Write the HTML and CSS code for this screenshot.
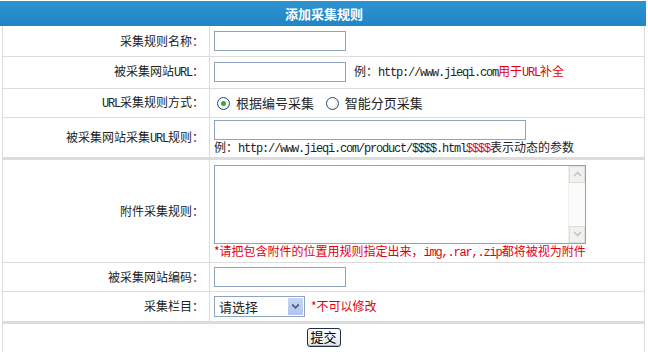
FILE: index.html
```html
<!DOCTYPE html>
<html lang="zh">
<head>
<meta charset="utf-8">
<title>添加采集规则</title>
<link rel="stylesheet" href="styles.css">
</head>
<body>
<div class="wrap">
  <div class="head">添加采集规则</div>
  <table class="grid">
    <tr class="r1">
      <td class="lab">采集规则名称：</td>
      <td class="val"><span class="inp w130"></span></td>
    </tr>
    <tr class="r2">
      <td class="lab">被采集网站<span class="en">URL</span>：</td>
      <td class="val"><span class="inp w130"></span><span class="tip">例：<span class="en">http://www.jieqi.com</span><span class="red">用于<span class="en">URL</span>补全</span></span></td>
    </tr>
    <tr class="r3">
      <td class="lab"><span class="en">URL</span>采集规则方式：</td>
      <td class="val">
        <span class="radio on"></span><span class="rtext">根据编号采集</span>
        <span class="radio"></span><span class="rtext">智能分页采集</span>
      </td>
    </tr>
    <tr class="r4">
      <td class="lab">被采集网站采集<span class="en">URL</span>规则：</td>
      <td class="val"><span class="inp w312"></span><div class="ex">例：<span class="en">http://www.jieqi.com/product/$$$$.html</span><span class="red en">$$$$</span>表示动态的参数</div></td>
    </tr>
    <tr class="r5">
      <td class="lab">附件采集规则：</td>
      <td class="val">
        <div class="area"><div class="sb"><span class="sbb">
          <svg width="9" height="6" viewBox="0 0 9 6"><path d="M1 5 L4.5 1.5 L8 5" fill="none" stroke="#b9c0c8" stroke-width="1.3"/></svg></span><span class="sbt"></span><span class="sbb">
          <svg width="9" height="6" viewBox="0 0 9 6"><path d="M1 1 L4.5 4.5 L8 1" fill="none" stroke="#b9c0c8" stroke-width="1.3"/></svg></span></div></div>
        <div class="note red">*请把包含附件的位置用规则指定出来，<span class="en">img,.rar,.zip</span>都将被视为附件</div>
      </td>
    </tr>
    <tr class="r6">
      <td class="lab">被采集网站编码：</td>
      <td class="val"><span class="inp w130"></span></td>
    </tr>
    <tr class="r7">
      <td class="lab">采集栏目：</td>
      <td class="val"><span class="sel"><span class="seltxt">请选择</span><span class="selbtn"><svg width="9" height="7" viewBox="0 0 9 7"><path d="M1.2 1.5 L4.5 4.8 L7.8 1.5" fill="none" stroke="#4d6185" stroke-width="1.8"/></svg></span></span><span class="red warn">*不可以修改</span></td>
    </tr>
    <tr class="r8">
      <td class="sub" colspan="2"><span class="btn">提交</span></td>
    </tr>
  </table>
</div>
</body>
</html>
```
FILE: styles.css
```css
* { box-sizing: border-box; }
body {
  margin: 0;
  background: #fff;
  font-family: "Noto Sans CJK SC", "Noto Sans", sans-serif;
  font-size: 12px;
  color: #222;
}
.wrap {
  width: 646px;
  padding-top: 1px;
}
.head {
  height: 25px;
  line-height: 25px;
  background: linear-gradient(#2d93d0, #2285c6);
  color: #fff;
  font-weight: bold;
  font-size: 13px;
  text-align: center;
  padding-left: 2px;
}
.grid {
  margin-left: 2px;
  width: 643px;
  border-collapse: collapse;
}
.grid td {
  border: 1px solid #dcdcdc;
  padding: 0;
  line-height: 16px;
}
.grid tr:first-child td { border-top: 0; }
.lab {
  width: 207px;
  text-align: right;
  padding-right: 5px !important;
}
.val {
  padding-left: 4px !important;
}
.en {
  font-family: "Liberation Mono", monospace;
  letter-spacing: -1.2px;
  font-size: 12px;
}
.red { color: #e0000e; }
.inp {
  display: inline-block;
  vertical-align: middle;
  height: 20px;
  border: 1px solid #8ea3bc;
  background: #fff;
}
.w130 { width: 132px; }
.w312 { width: 312px; }
.r1 td { height: 30px; }
.r2 td { height: 32px; }
.r3 td { height: 29px; }
.r4 td { height: 38px; border-bottom: 3px solid #dcdcdc; }
.r4 .val { padding-top: 2px !important; vertical-align: top; }
.r4 .lab { padding-top: 2px !important; }
.tip { margin-left: 8px; vertical-align: middle; }
.ex { margin-top: -1px; line-height: 16px; }
.radio {
  display: inline-block;
  width: 13px;
  height: 13px;
  border-radius: 50%;
  border: 1px solid #1d5180;
  background: radial-gradient(circle at 40% 40%, #fff 30%, #dcdcd6 100%);
  vertical-align: middle;
  margin-left: 3px;
  margin-right: 6px;
  position: relative;
}
.radio.on::after {
  content: "";
  position: absolute;
  left: 3px;
  top: 3px;
  width: 5px;
  height: 5px;
  border-radius: 50%;
  background: #3fa33f;
}
.rtext { vertical-align: middle; margin-right: 6px; font-size: 13px; }
.r5 td { height: 104px; border-bottom: 1px solid #dcdcdc; }
.r5 .val { padding-top: 5px !important; vertical-align: top; }
.area {
  width: 372px;
  height: 79px;
  border: 1px solid #8ea3bc;
  display: flex;
  justify-content: flex-end;
}
.sb {
  width: 17px;
  background: #fbfbf9;
  border-left: 1px solid #eeeeea;
  display: flex;
  flex-direction: column;
}
.sbb {
  height: 17px;
  background: #f1f1ed;
  border: 1px solid #e0e0da;
  display: flex;
  align-items: center;
  justify-content: center;
}
.sbt { flex: 1; }
.note { margin-top: 0; line-height: 14px; }
.r6 td { height: 29px; }
.r7 td { height: 31px; border-bottom: 3px solid #dcdcdc; }
.sel {
  display: inline-flex;
  vertical-align: middle;
  width: 91px;
  height: 21px;
  border: 1px solid #8ea3bc;
  background: #fff;
}
.seltxt { flex: 1; padding-left: 4px; line-height: 19px; font-size: 13px; }
.selbtn {
  width: 17px;
  background: linear-gradient(#c7d6f5, #b0c4ee);
  display: flex;
  align-items: center;
  justify-content: center;
  border: 1px solid #fff;
}
.warn { margin-left: 6px; vertical-align: middle; font-size: 12px; }
.r8 td { height: 30px; border-bottom: 0; }
.sub { text-align: center; padding-top: 1px !important; vertical-align: top; padding-top: 4px !important; }
.btn {
  display: inline-block;
  width: 34px;
  height: 19px;
  line-height: 15px;
  border: 1px solid #1c2e4c;
  border-radius: 3px;
  background: linear-gradient(#ffffff, #e6e6de);
  box-shadow: inset 0 -1px 0 #a9b4c6;
  text-align: center;
  font-size: 13px;
  color: #000;
}
```
